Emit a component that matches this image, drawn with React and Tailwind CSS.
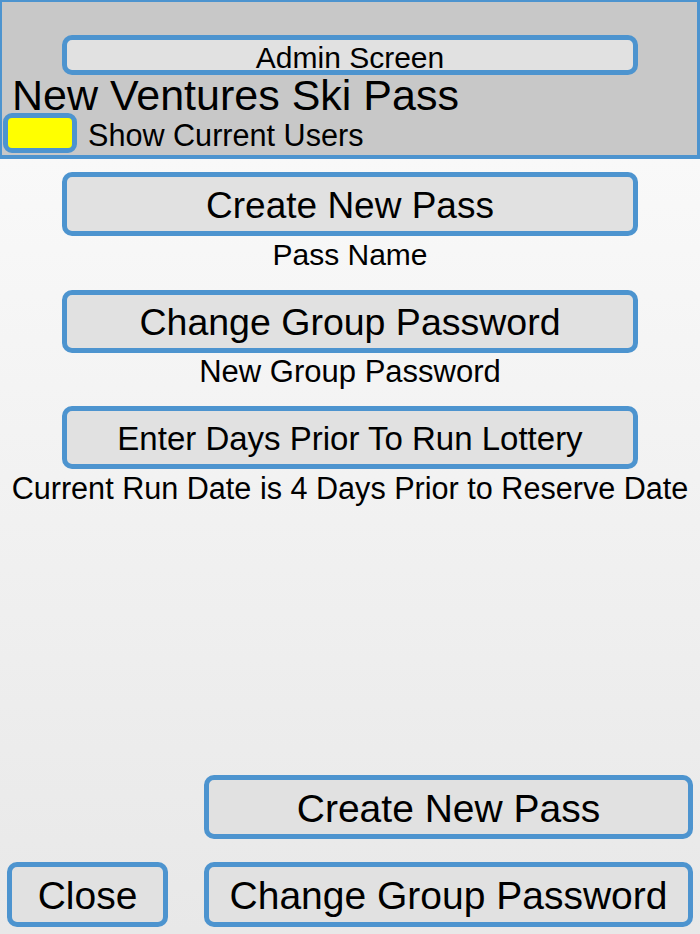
import React from 'react'

const FONT = { fontFamily: '"Liberation Sans", Arial, sans-serif' }

function BlueButton({ className = '', children }) {
  return (
    <div
      className={`flex items-center justify-center rounded-[10px] border-[5px] border-[#4d94cf] bg-[#e1e1e1] text-black leading-none ${className}`}
    >
      {children}
    </div>
  )
}

export default function App() {
  return (
    <div className="flex h-[934px] w-[700px] flex-col overflow-hidden bg-white" style={FONT}>
      {/* Header */}
      <div className="h-[159px] shrink-0 border-t-2 border-l-2 border-r-[3px] border-b-4 border-[#4d94cf] bg-[#c8c8c8] pt-[33px]">
        <BlueButton className="ml-[60px] h-[40px] w-[576px] pt-[5px] text-[30px]">Admin Screen</BlueButton>
        <div className="flex h-[38px] items-center pl-[10px] pt-[3px] text-[43px] leading-[35px] text-black">
          New Ventures Ski Pass
        </div>
        <div className="flex h-[40px] items-center">
          <div className="ml-[1px] h-[40px] w-[74px] rounded-[9px] border-[5px] border-[#4d94cf] bg-[#ffff00]" />
          <span className="ml-[11px] pt-[5px] text-[30.6px] leading-none text-black">Show Current Users</span>
        </div>
      </div>

      {/* Body */}
      <div className="flex flex-1 flex-col bg-gradient-to-b from-[#f9f9f9] to-[#e8e8e8]">
        <div className="flex flex-col items-center pt-[13px]">
          <BlueButton className="h-[64px] w-[576px] pt-[2px] text-[37px]">Create New Pass</BlueButton>
          <div className="flex h-[36px] items-center pt-[1px] text-[30px] leading-none text-black">Pass Name</div>
          <BlueButton className="mt-[18px] h-[63px] w-[576px] pt-[2px] text-[37.5px]">Change Group Password</BlueButton>
          <div className="flex h-[36px] items-center pt-[1px] text-[31px] leading-none text-black">New Group Password</div>
          <BlueButton className="mt-[17px] h-[63px] w-[576px] pt-[2px] text-[33px]">Enter Days Prior To Run Lottery</BlueButton>
          <div className="flex h-[38px] items-center text-[30.6px] leading-none text-black">
            Current Run Date is 4 Days Prior to Reserve Date
          </div>
        </div>

        <div className="flex-1" />

        <div className="flex flex-col items-end pr-[7px]">
          <BlueButton className="h-[64px] w-[489px] pt-[2px] text-[39px]">Create New Pass</BlueButton>
        </div>
        <div className="mt-[23px] mb-[7px] flex items-center justify-between pl-[7px] pr-[7px]">
          <BlueButton className="h-[65px] w-[161px] pt-[2px] text-[39px]">Close</BlueButton>
          <BlueButton className="h-[65px] w-[489px] pt-[2px] text-[39px]">Change Group Password</BlueButton>
        </div>
      </div>
    </div>
  )
}
